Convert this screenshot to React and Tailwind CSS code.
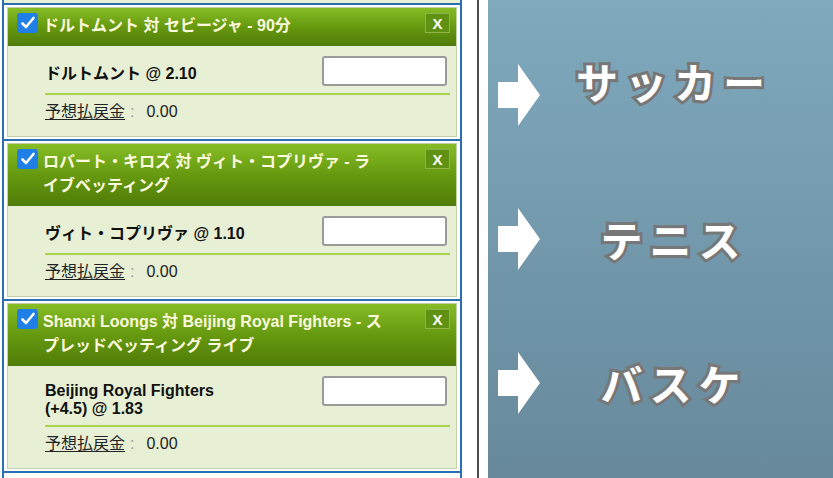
import React from 'react'

const bets = [
  {
    title: ['ドルトムント 対 セビージャ - 90分'],
    pick: ['ドルトムント @ 2.10'],
  },
  {
    title: ['ロバート・キロズ 対 ヴィト・コプリヴァ - ラ', 'イブベッティング'],
    pick: ['ヴィト・コプリヴァ @ 1.10'],
  },
  {
    title: ['Shanxi Loongs 対 Beijing Royal Fighters - ス', 'プレッドベッティング ライブ'],
    pick: ['Beijing Royal Fighters', '(+4.5) @ 1.83'],
  },
]

const sports = ['サッカー', 'テニス', 'バスケ']

function CheckBox() {
  return (
    <div className="w-[21px] h-[20px] rounded-[3px] bg-[#1f7fe6] flex items-center justify-center shrink-0">
      <svg width="16" height="16" viewBox="0 0 16 16">
        <path d="M2.5 8.5l3.5 3.5 7.5-9" fill="none" stroke="#fff" strokeWidth="2.6" strokeLinecap="round" strokeLinejoin="round" />
      </svg>
    </div>
  )
}

function BetCard({ bet }) {
  const twoLine = bet.pick.length > 1
  return (
    <div className="border-b-2 border-[#2a6fb0] px-[3px] py-[2px]">
      <div className="border border-[#c4d0ab] bg-[#e7efd4]">
        <div className="flex items-start bg-gradient-to-b from-[#86bd25] via-[#66990f] to-[#4f7c09] pl-[9px] pr-[6px] pt-[5px] pb-[8px]">
          <CheckBox />
          <div className="flex-1 pl-[5px] pt-[1px] text-[16px] leading-[24px] font-bold text-[#fcf9df] whitespace-nowrap">
            {bet.title.map((t) => (
              <div key={t} className="h-[24px]">{t}</div>
            ))}
          </div>
          <div className="w-[25px] h-[20px] border border-[#8fb44a] bg-[#5f9212] flex items-center justify-center text-white font-bold text-[15px] leading-none">
            X
          </div>
        </div>
        <div className="pl-[37px] pr-[6px] pt-[10px] pb-[14px]">
          <div className="flex items-start justify-between pr-[3px]">
            <div className={`text-[16px] leading-[18px] font-bold text-[#111] ${twoLine ? 'pt-[6px]' : 'pt-[9px]'}`}>
              {bet.pick.map((p) => (
                <div key={p} className="h-[18px]">{p}</div>
              ))}
            </div>
            <div className="w-[125px] h-[30px] bg-white border-2 border-[#9a9a9a] rounded-[3px]" />
          </div>
          <div className="h-[2px] bg-[#aad050] mt-[7px]" />
          <div className="mt-[7px] h-[20px] text-[16px] leading-[20px] text-[#222] flex items-center">
            <span className="underline underline-offset-2">予想払戻金</span>
            <span className="text-[#999] ml-[5px] mr-[12px]">:</span>
            <span>0.00</span>
          </div>
        </div>
      </div>
    </div>
  )
}

function Arrow() {
  return (
    <svg width="42" height="62" viewBox="0 0 42 62" className="shrink-0">
      <polygon points="0,18 20,18 20,0 42,31 20,62 20,44 0,44" fill="#fff" />
    </svg>
  )
}

export default function App() {
  return (
    <div className="w-[833px] h-[478px] flex bg-white overflow-hidden font-['Liberation_Sans','Noto_Sans_CJK_JP',sans-serif]">
      <div className="ml-[2px] w-[460px] h-full border-x-2 border-[#2a6fb0] flex flex-col">
        <div className="h-[3px] shrink-0 bg-[#e7efd4] border-b-2 border-[#2a6fb0] box-content" />
        {bets.map((b, i) => (
          <BetCard key={i} bet={b} />
        ))}
      </div>
      <div className="w-[15px]" />
      <div className="w-[2px] bg-[#4d4d4d]" />
      <div className="w-[9px]" />
      <div className="flex-1 bg-gradient-to-b from-[#80a9be] to-[#67899b] flex flex-col pt-[64px] gap-[82px]">
        {sports.map((s, i) => (
          <div key={s} className="flex items-center h-[62px] pl-[10px]">
            <Arrow />
            <div className={`flex-1 pr-[25px] text-center font-['Noto_Sans_CJK_JP',sans-serif] font-bold text-[42px] leading-none tracking-[7px] text-white [-webkit-text-stroke:6px_#777] [paint-order:stroke_fill] ${i === 0 ? 'mb-[28px]' : ''}`}>
              {s}
            </div>
          </div>
        ))}
      </div>
    </div>
  )
}
